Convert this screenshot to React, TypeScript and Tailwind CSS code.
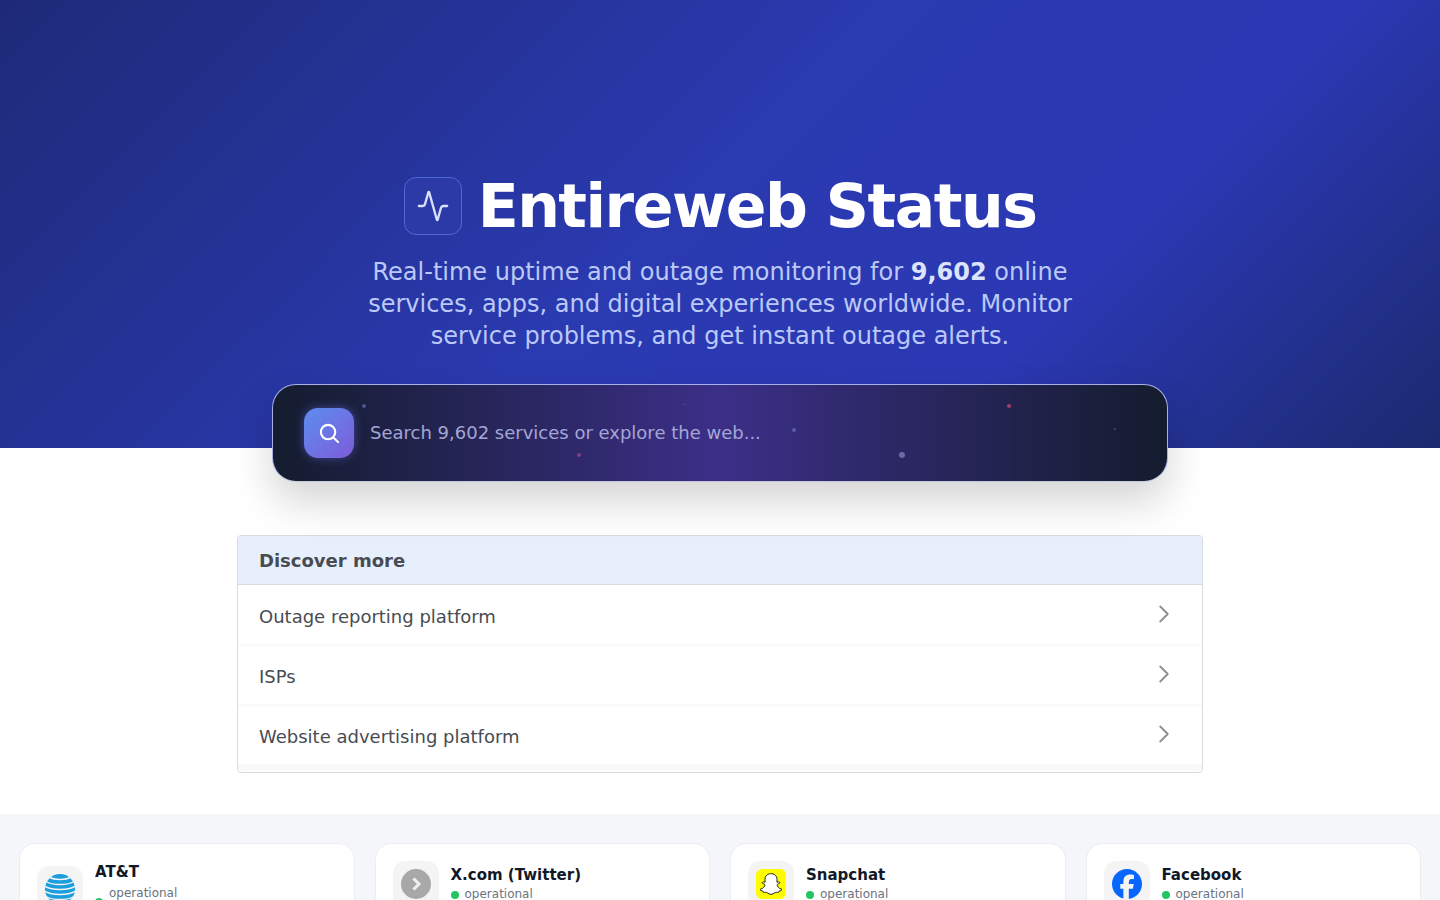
import { Activity, ChevronRight } from "lucide-react";
import { SiFacebook } from "react-icons/si";
import { FaSnapchatGhost } from "react-icons/fa";

const font = { fontFamily: '"DejaVu Sans", sans-serif' };

function Dot({ cls }: { cls: string }) {
  return <span className={"absolute rounded-full " + cls} />;
}

function Row({ label, cls, textCls, iconCls }: { label: string; cls: string; textCls: string; iconCls: string }) {
  return (
    <div className={"flex justify-between pl-[21px] pr-[23px] " + cls}>
      <span className={"text-[18px] leading-[28px] text-[#484c52] " + textCls}>{label}</span>
      <ChevronRight size={30} strokeWidth={1.5} className={"text-[#8c8f94] " + iconCls} />
    </div>
  );
}

function Tile({ children }: { children: React.ReactNode }) {
  return <div className="flex h-[46px] w-[46px] shrink-0 items-center justify-center rounded-[12px] bg-[#f4f4f5]">{children}</div>;
}

function Card({ name, icon }: { name: string; icon: React.ReactNode }) {
  return (
    <div className="flex h-[120px] gap-3 rounded-[16px] border border-[#eceef2] bg-white px-[17px] pt-[17px]">
      <Tile>{icon}</Tile>
      <div className="pt-[2px]">
        <div className="text-[15px] font-bold leading-[24px] text-[#111827]">{name}</div>
        <div className="-mt-[1px] flex items-center gap-[6px]">
          <span className="mt-[2px] h-2 w-2 rounded-full bg-[#22c55e]" />
          <span className="text-[12px] leading-[16px] text-[#6b7280]">operational</span>
        </div>
      </div>
    </div>
  );
}

export default function App() {
  return (
    <div className="h-[900px] overflow-hidden bg-white" style={font}>
      <header className="flex h-[448px] flex-col items-center bg-[linear-gradient(135deg,#1e2a78_0%,#2a3ab0_47%,#2b38b4_72%,#1b2a6e_100%)] pt-[177px]">
        <div className="flex items-center gap-4">
          <div className="flex h-[58px] w-[58px] items-center justify-center rounded-[12px] border border-[#4d68d4] bg-[#2c3aa8]">
            <Activity size={34} strokeWidth={1.6} className="text-[#d6e2ff]" />
          </div>
          <h1 className="text-[60px] font-bold leading-[58px] tracking-[-1.5px] text-white">Entireweb Status</h1>
        </div>
        <p className="mt-[21px] w-[720px] text-center text-[24px] leading-[32px] text-[#bcc9f8]">
          Real-time uptime and outage monitoring for <strong className="font-bold text-[#dbe4ff]">9,602</strong> online services, apps, and digital experiences worldwide. Monitor service problems, and get instant outage alerts.
        </p>
      </header>

      <div className="relative mx-auto -mt-[64px] flex h-[98px] w-[896px] items-center rounded-[24px] border border-[#a8b0e8] border-b-[#c4c8d8] bg-[linear-gradient(90deg,#141c2e_0%,#3b2f88_50%,#141c2e_100%)] pl-[31px] shadow-[0_20px_40px_rgba(0,0,0,0.17)]">
        <Dot cls="left-[89px] top-[19px] h-[4px] w-[4px] bg-[#4b5590]" />
        <Dot cls="left-[411px] top-[19px] h-[1px] w-[1px] bg-[#7b6fb8]" />
        <Dot cls="left-[304px] top-[68px] h-[4px] w-[4px] bg-[#7d3f8a]" />
        <Dot cls="left-[519px] top-[43px] h-[4px] w-[4px] bg-[#5d5ca8]" />
        <Dot cls="left-[626px] top-[67px] h-[6px] w-[6px] bg-[#6a6ba6]" />
        <Dot cls="left-[734px] top-[19px] h-[4px] w-[4px] bg-[#a03a70]" />
        <Dot cls="left-[841px] top-[43px] h-[2px] w-[2px] bg-[#5a3f7a]" />
        <div className="flex h-[50px] w-[50px] items-center justify-center rounded-[14px] bg-[linear-gradient(135deg,#5c8df0,#7d5cd8)] shadow-[0_0_10px_rgba(110,120,255,0.45)]">
          <svg width="23" height="23" viewBox="0 0 24 24" fill="none" stroke="white" strokeWidth="2.2" strokeLinecap="round">
            <path d="M21 21l-5.197-5.197m0 0A7.5 7.5 0 105.196 5.196a7.500 7.500 0 0010.607 10.607z" />
          </svg>
        </div>
        <span className="ml-[16px] text-[18px] leading-[28px] text-[#a5a6d6]">Search 9,602 services or explore the web...</span>
      </div>

      <section className="mx-auto mt-[53px] h-[238px] w-[966px] overflow-hidden rounded-[4px] border border-[#d8dade]">
        <div className="flex h-[49px] items-center border-b border-[#d8dade] bg-[#e8effc] pl-[21px] text-[18px] font-bold text-[#484c52]">Discover more</div>
        <Row label="Outage reporting platform" cls="h-[62px] border-b-[3px] border-[#fbfbfb]" textCls="pt-[18px]" iconCls="mt-[14px]" />
        <Row label="ISPs" cls="h-[60px] border-b-[3px] border-[#fbfbfb]" textCls="pt-[16px]" iconCls="mt-[12px]" />
        <Row label="Website advertising platform" cls="h-[64px] border-b-[7px] border-[#f8f9fa]" textCls="pt-[16px]" iconCls="mt-[12px]" />
      </section>

      <section className="mt-[41px] grid h-[200px] grid-cols-4 gap-5 bg-[#f4f6fa] px-[19px] pt-[29px]">
        <div className="flex h-[120px] gap-3 rounded-[16px] border border-[#eceef2] bg-white px-[17px] pt-[22px]">
          <Tile>
            <svg width="30" height="30" viewBox="0 0 30 30">
              <circle cx="15" cy="15" r="15" fill="#1b9fdc" />
              <g fill="none" stroke="#f4f4f5" strokeWidth="1.5">
                <path d="M5 3.500C9 6 21 6 25 3.500" />
                <path d="M1 7.500C7 11.500 23 11.500 29 7.500" />
                <path d="M0 12.500C7 16.500 23 16.500 30 12.500" />
                <path d="M0 17.500C7 21.500 23 21.500 30 17.500" />
                <path d="M1 22.500C7 26.500 23 26.500 29 22.500" />
              </g>
            </svg>
          </Tile>
          <div className="-mt-[6px]">
            <div className="text-[15px] font-bold leading-[24px] text-[#111827]">AT&amp;T</div>
            <div className="mt-[1px] flex items-end gap-[6px]">
              <span className="mb-[-5px] h-2 w-2 rounded-full bg-[#22c55e]" />
              <span className="text-[12px] leading-[16px] text-[#6b7280]">operational</span>
            </div>
          </div>
        </div>
        <Card
          name="X.com (Twitter)"
          icon={
            <svg width="30" height="30" viewBox="0 0 30 30">
              <circle cx="15" cy="15" r="15" fill="#a8a8a8" />
              <path d="M12.500 9.500 18 15l-5.500 5.500" fill="none" stroke="#f0f0f0" strokeWidth="3" />
            </svg>
          }
        />
        <Card
          name="Snapchat"
          icon={
            <div className="flex h-[30px] w-[30px] items-center justify-center rounded-[6px] bg-[#fffc00]">
              <FaSnapchatGhost size={22} className="text-white [&_path]:stroke-black [&_path]:stroke-[20px]" />
            </div>
          }
        />
        <Card name="Facebook" icon={<SiFacebook size={30} className="text-[#0866ff]" />} />
      </section>
    </div>
  );
}
